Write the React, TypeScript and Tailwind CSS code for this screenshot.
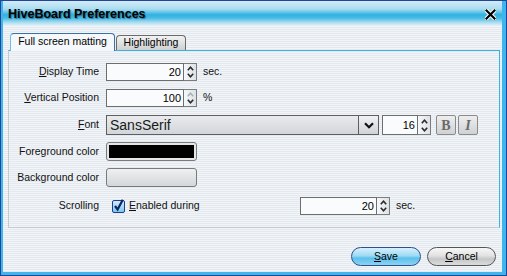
import React from "react";

const stripes =
  "bg-[repeating-linear-gradient(to_bottom,#f2f5f8_0px,#f2f5f8_1px,#e3e9ee_1px,#e3e9ee_2px)]";

function Up({ disabled }: { disabled?: boolean }) {
  return (
    <svg width="7" height="5" viewBox="0 0 7 5">
      <path d="M0.8 4.2 L3.5 1.2 L6.2 4.2" fill="none" stroke={disabled ? "#a8b0b8" : "#2a2a2a"} strokeWidth="1.6" />
    </svg>
  );
}
function Down() {
  return (
    <svg width="7" height="5" viewBox="0 0 7 5">
      <path d="M0.8 0.8 L3.5 3.8 L6.2 0.8" fill="none" stroke="#2a2a2a" strokeWidth="1.6" />
    </svg>
  );
}

function Spinner({ upDisabled }: { upDisabled?: boolean }) {
  return (
    <div className="flex h-full w-[13px] flex-col border border-l-0 border-[#7c7c7c] bg-[linear-gradient(to_right,#f6f8fa,#dde2e7)]">
      <div className="flex flex-1 items-center justify-center pt-[1px]">
        <Up disabled={upDisabled} />
      </div>
      <div className="flex flex-1 items-center justify-center pb-[1px]">
        <Down />
      </div>
    </div>
  );
}

function NumberField({ value, widthClass, upDisabled }: { value: string; widthClass: string; upDisabled?: boolean }) {
  return (
    <div className="flex h-[18px]">
      <div
        className={`flex h-full items-center justify-end border border-[#6e6e6e] bg-[#f9fbfd] pr-[2px] text-[11px] text-black ${widthClass}`}
      >
        {value}
      </div>
      <Spinner upDisabled={upDisabled} />
    </div>
  );
}

function Label({ children }: { children: React.ReactNode }) {
  return <div className="w-[90px] shrink-0 text-right text-[10.5px] text-[#111]">{children}</div>;
}

export default function App() {
  return (
    <div className="h-[276px] w-[507px] overflow-hidden border border-[#24449a] font-['Liberation_Sans',Arial,sans-serif]">
      <div className="flex h-full w-full flex-col border-b-[3px] border-l-2 border-r-4 border-[#3cb6ec]">
        {/* Title bar */}
        <div className="flex h-[25px] shrink-0 items-center justify-between bg-[linear-gradient(to_bottom,#d2ecf6_0%,#aadcf0_32%,#2fb2e0_55%,#45bbe5_68%,#a9dbef_85%,#e6f2f7_100%)] pl-[5px] pr-[6px]">
          <div className="pt-[2px] text-[12.5px] font-bold text-black [text-shadow:1px_1px_1px_rgba(20,60,90,0.55)]">
            HiveBoard Preferences
          </div>
          <svg width="11" height="11" viewBox="0 0 11 11" className="mt-[2px]">
            <path d="M1.5 1.5 L9.5 9.5 M9.5 1.5 L1.5 9.5" stroke="#ffffff" strokeWidth="4.2" strokeLinecap="square" />
            <path d="M1.5 1.5 L9.5 9.5 M9.5 1.5 L1.5 9.5" stroke="#000000" strokeWidth="2.2" strokeLinecap="square" />
          </svg>
        </div>

        {/* Body */}
        <div className={`flex flex-1 flex-col ${stripes} pt-[7px]`}>
          {/* Tabs */}
          <div className="ml-[7px] flex items-end">
            <div className="relative z-10 -mb-px flex h-[18px] w-[105px] items-center justify-center rounded-t-[4px] border border-b-0 border-[#3a6fa8] border-l-[#6cc0ea] bg-[#f5f8fb] pb-[1px] text-[10.5px] text-black">
              Full screen matting
            </div>
            <div className="ml-[1px] flex h-[15px] w-[70px] items-center justify-center rounded-t-[4px] border border-b-0 border-[#6a6a6a] bg-[linear-gradient(to_bottom,#f3f3f3,#cdcfd1)] text-[10.5px] text-black">
              Highlighting
            </div>
          </div>

          {/* Panel */}
          <div className="ml-[5px] mr-[2px] flex flex-col border border-[#c3cbd2] border-r-[#3cb2e2] border-t-[#3cb2e2] pb-[12px] pt-[12px]">
            {/* Display time */}
            <div className="flex h-[18px] items-center">
              <Label>
                <span className="underline">D</span>isplay Time
              </Label>
              <div className="ml-[7px]">
                <NumberField value="20" widthClass="w-[78px]" />
              </div>
              <span className="ml-[6px] text-[10.5px] text-[#111]">sec.</span>
            </div>

            {/* Vertical position */}
            <div className="mt-[8px] flex h-[18px] items-center">
              <Label>
                <span className="underline">V</span>ertical Position
              </Label>
              <div className="ml-[7px]">
                <NumberField value="100" widthClass="w-[78px]" upDisabled />
              </div>
              <span className="ml-[6px] text-[10.5px] text-[#111]">%</span>
            </div>

            {/* Font */}
            <div className="mt-[8px] flex h-[20px] items-center">
              <Label>
                <span className="underline">F</span>ont
              </Label>
              <div className="ml-[7px] flex h-full">
                <div className="flex h-full w-[253px] items-center border border-[#5e5e5e] bg-[linear-gradient(to_bottom,#e9ebed,#d2d6da)] pl-[3px] text-[14px] text-[#1a1a1a]">
                  SansSerif
                </div>
                <div className="flex h-full w-[20px] items-center justify-center border border-l-0 border-[#5e5e5e] bg-[linear-gradient(to_bottom,#f0f2f4,#cfd3d7)]">
                  <svg width="10" height="7" viewBox="0 0 10 7">
                    <path d="M1 1.3 L5 5.3 L9 1.3" fill="none" stroke="#111" strokeWidth="2.2" />
                  </svg>
                </div>
              </div>
              <div className="ml-[3px] flex h-[20px] items-center">
                <div className="flex h-full">
                  <div className="flex h-full w-[36px] items-center justify-end border border-[#6e6e6e] bg-[#f9fbfd] pr-[2px] text-[11px] text-black">
                    16
                  </div>
                  <Spinner />
                </div>
              </div>
              <div className="ml-[5px] flex h-[20px] w-[20px] items-center justify-center rounded-[2px] border border-[#8a8a8a] bg-[linear-gradient(to_bottom,#eeeeee,#cfd1d3)] font-['Liberation_Serif',serif] text-[14px] font-bold text-[#6a6a6a]">
                B
              </div>
              <div className="ml-[2px] flex h-[20px] w-[20px] items-center justify-center rounded-[2px] border border-[#8a8a8a] bg-[linear-gradient(to_bottom,#eeeeee,#cfd1d3)] font-['Liberation_Serif',serif] text-[14px] font-bold italic text-[#6a6a6a]">
                I
              </div>
            </div>

            {/* Foreground */}
            <div className="mt-[7px] flex h-[19px] items-center">
              <Label>Foreground color</Label>
              <div className="ml-[7px] h-full w-[91px] rounded-[3px] border border-[#7a7a7a] bg-[#e4e6e8] p-[2px]">
                <div className="h-full w-full bg-black" />
              </div>
            </div>

            {/* Background */}
            <div className="mt-[7px] flex h-[19px] items-center">
              <Label>Background color</Label>
              <div className="ml-[7px] h-full w-[91px] rounded-[3px] border border-[#7a7a7a] bg-[linear-gradient(to_bottom,#eef0f1,#d4d7da)]" />
            </div>

            {/* Scrolling */}
            <div className="mt-[10px] flex h-[18px] items-center">
              <Label>Scrolling</Label>
              <div className="ml-[7px] flex w-[194px] items-center pl-[6px]">
                <svg width="13" height="14" viewBox="0 0 13 14">
                  <defs>
                    <linearGradient id="cb" x1="0" y1="0" x2="0" y2="1">
                      <stop offset="0" stopColor="#d4eefb" />
                      <stop offset="1" stopColor="#7cc6ec" />
                    </linearGradient>
                  </defs>
                  <rect x="0.5" y="1.5" width="12" height="12" rx="1.5" fill="url(#cb)" stroke="#1e3f8e" />
                  <path d="M3 7 L5.6 10.4 L10.8 0.8" fill="none" stroke="#14246a" strokeWidth="2.2" />
                </svg>
                <span className="ml-[4px] text-[10.5px] text-[#111]">
                  <span className="underline">E</span>nabled during
                </span>
              </div>
              <NumberField value="20" widthClass="w-[77px]" />
              <span className="ml-[6px] text-[10.5px] text-[#111]">sec.</span>
            </div>
          </div>

          {/* Buttons */}
          <div className="mt-[19px] flex justify-end gap-[6px] pr-[6px]">
            <button className="flex h-[19px] w-[70px] items-center justify-center rounded-full border border-[#2b4f8c] bg-[linear-gradient(to_bottom,#d6f0fb_0%,#9fdaf4_45%,#5cc0ec_60%,#8ed2f2_100%)] text-[10.5px] text-black">
              <span>
                <span className="underline">S</span>ave
              </span>
            </button>
            <button className="flex h-[19px] w-[69px] items-center justify-center rounded-full border border-[#555] bg-[linear-gradient(to_bottom,#f7f7f7_0%,#e2e2e2_45%,#c4c6c8_65%,#dcdcdc_100%)] text-[10.5px] text-black">
              <span>
                <span className="underline">C</span>ancel
              </span>
            </button>
          </div>
        </div>
      </div>
    </div>
  );
}
